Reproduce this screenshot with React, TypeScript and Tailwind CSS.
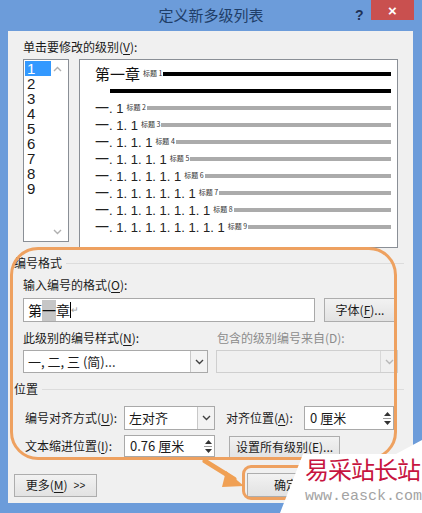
import React from "react";

const cjk = { fontFamily: '"Noto Sans CJK SC", "Liberation Sans", sans-serif' };
const latin = { fontFamily: '"Liberation Sans", "Noto Sans CJK SC", sans-serif' };

function Chevron({ up = false, className = "" }: { up?: boolean; className?: string }) {
  return (
    <svg width="9" height="6" viewBox="0 0 9 6" className={className}>
      <path
        d={up ? "M1 5 L4.5 1.5 L8 5" : "M1 1 L4.5 4.5 L8 1"}
        fill="none"
        stroke="currentColor"
        strokeWidth="1.4"
      />
    </svg>
  );
}

function Select({ text, w, disabled = false }: { text?: string; w: string; disabled?: boolean }) {
  return (
    <div
      className={`${w} flex h-full border ${
        disabled ? "border-[#cfcfcf] bg-[#f0f0f0]" : "border-[#a9a9a9] bg-white"
      }`}
    >
      <div className="flex flex-1 items-center pl-[4px] text-[13px] text-[#1a1a1a]" style={cjk}>
        {text}
      </div>
      <div
        className={`flex w-[17px] items-center justify-center border-l ${
          disabled ? "border-[#d8d8d8] text-[#b8b8b8]" : "border-[#c8c8c8] bg-[#f3f3f3] text-[#404040]"
        }`}
      >
        <Chevron />
      </div>
    </div>
  );
}

function Spin({ text, w }: { text: string; w: string }) {
  return (
    <div className={`${w} flex h-full border border-[#a9a9a9] bg-white`}>
      <div className="flex flex-1 items-center pl-[5px] text-[13px] text-[#1a1a1a]" style={cjk}>
        {text}
      </div>
      <div className="flex w-[11px] flex-col items-center justify-center gap-[2px] pr-[1px] text-[#333]">
        <svg width="7" height="4" viewBox="0 0 7 4">
          <path d="M0 4 L3.5 0 L7 4 Z" fill="currentColor" />
        </svg>
        <div className="h-px w-[8px] bg-[#9a9a9a]" />
        <svg width="7" height="4" viewBox="0 0 7 4">
          <path d="M0 0 L3.5 4 L7 0 Z" fill="currentColor" />
        </svg>
      </div>
    </div>
  );
}

function Btn({ children, w, className = "" }: { children: React.ReactNode; w: string; className?: string }) {
  return (
    <div
      className={`${w} flex items-center justify-center whitespace-nowrap border border-[#adadad] bg-gradient-to-b from-[#f2f2f2] to-[#e2e2e2] text-[12px] text-[#1a1a1a] ${className}`}
      style={cjk}
    >
      {children}
    </div>
  );
}

function U({ children }: { children: React.ReactNode }) {
  return <span className="underline underline-offset-2">{children}</span>;
}

function Group({ title }: { title: string }) {
  return (
    <div className="flex items-center gap-[4px] pl-[6px] pr-[9px]">
      <span className="text-[12px] leading-[16px] text-[#1a1a1a]" style={cjk}>
        {title}
      </span>
      <div className="h-px flex-1 bg-[#dcdcdc]" />
    </div>
  );
}

export default function App() {
  const levels = [2, 3, 4, 5, 6, 7, 8, 9];

  return (
    <div className="relative h-[513px] w-[422px] overflow-hidden bg-[#6c9cda]">
      {/* title bar */}
      <div className="relative flex h-[31px] items-center justify-center">
        <span className="text-[15px] text-[#1f3e68]" style={cjk}>
          定义新多级列表
        </span>
        <span
          className="absolute left-[355px] top-[5px] text-[14px] font-bold text-[#1f3256]"
          style={latin}
        >
          ?
        </span>
        <div
          className="absolute left-[371px] top-0 flex h-[20px] w-[43px] items-center justify-center bg-[#c9504f] text-[15px] font-bold leading-none text-white"
          style={latin}
        >
          ×
        </div>
      </div>

      {/* client */}
      <div className="ml-[8px] mr-[9px] h-[472px] bg-[#f0f0f0]">
        <div className="pl-[15px] pt-[8px] text-[12px] leading-[16px] text-[#1a1a1a]" style={cjk}>
          单击要修改的级别(<U>V</U>):
        </div>

        <div className="mt-[4px] flex items-start pl-[15px]">
          <div className="relative h-[183px] w-[46px] border border-[#8a8f96] bg-white">
            <div className="flex flex-col pl-[1px] pt-[1px]">
              {[1, 2, 3, 4, 5, 6, 7, 8, 9].map((n) => (
                <div
                  key={n}
                  className={`h-[15px] w-[26px] pl-[2px] text-[15px] leading-[15px] ${
                    n === 1 ? "bg-[#3399ff] text-white" : "text-[#1a1a1a]"
                  }`}
                  style={latin}
                >
                  {n}
                </div>
              ))}
            </div>
            <Chevron up className="absolute right-[6px] top-[6px] text-[#b0b0b0]" />
            <Chevron className="absolute bottom-[6px] right-[6px] text-[#b0b0b0]" />
          </div>

          <div className="ml-[10px] h-[189px] w-[319px] border border-[#8a8f96] bg-white pl-[15px] pr-[6px] pt-[5px]">
            <div className="flex h-[17px] items-center">
              <span className="text-[15px] leading-none text-[#111]" style={cjk}>
                第一章
              </span>
              <span className="ml-[3px] text-[7px] leading-none text-[#333]" style={cjk}>
                标题 1
              </span>
              <div className="ml-[1px] h-[4px] flex-1 bg-black" />
            </div>
            <div className="flex h-[17px] items-center pl-[15px]">
              <div className="h-[4px] flex-1 bg-black" />
            </div>
            {levels.map((lv) => (
              <div key={lv} className="flex h-[17px] items-center">
                <span className="text-[13px] leading-none text-[#222]" style={latin}>
                  <span className="text-[14px]" style={cjk}>一</span>
                  {". 1".repeat(lv - 1)}
                </span>
                <span className="ml-[3px] text-[7px] leading-none text-[#333]" style={cjk}>
                  标题 {lv}
                </span>
                <div className="ml-[1px] h-[4px] flex-1 bg-[#ababab]" />
              </div>
            ))}
          </div>
        </div>

        <div className="mt-[7px]">
          <Group title="编号格式" />
        </div>

        <div className="pl-[15px] pt-[6px] text-[12px] leading-[16px] text-[#1a1a1a]" style={cjk}>
          输入编号的格式(<U>O</U>):
        </div>
        <div className="mt-[5px] flex h-[24px] pl-[15px]">
          <div
            className="flex w-[292px] items-center border border-[#a9a9a9] bg-white pl-[4px] text-[14px] text-[#111]"
            style={cjk}
          >
            <span>第</span>
            <span className="bg-[#c6c6c6]">一</span>
            <span>章</span>
            <span className="h-[16px] w-px bg-black" />
            <span className="text-[9px] text-[#999]">↵</span>
          </div>
          <Btn w="w-[72px]" className="ml-[9px]">
            字体(<U>F</U>)...
          </Btn>
        </div>

        <div className="mt-[8px] flex text-[12px] leading-[16px]" style={cjk}>
          <div className="w-[209px] pl-[15px] text-[#1a1a1a]">
            此级别的编号样式(<U>N</U>):
          </div>
          <div className="text-[#8c8c8c]">包含的级别编号来自(D):</div>
        </div>
        <div className="mt-[4px] flex h-[23px] pl-[15px]">
          <Select text="一, 二, 三 (简)..." w="w-[185px]" />
          <div className="ml-[8px] h-full">
            <Select w="w-[182px]" disabled />
          </div>
        </div>

        <div className="mt-[8px]">
          <Group title="位置" />
        </div>

        <div className="mt-[9px] flex h-[24px] items-center" style={cjk}>
          <div className="w-[116px] whitespace-nowrap pl-[17px] text-[12px] text-[#1a1a1a]">
            编号对齐方式(<U>U</U>):
          </div>
          <Select text="左对齐" w="w-[91px]" />
          <div className="w-[89px] whitespace-nowrap pl-[11px] text-[12px] text-[#1a1a1a]">
            对齐位置(<U>A</U>):
          </div>
          <Spin text="0 厘米" w="w-[90px]" />
        </div>

        <div className="mt-[5px] flex h-[22px] items-center" style={cjk}>
          <div className="w-[116px] whitespace-nowrap pl-[17px] text-[12px] text-[#1a1a1a]">
            文本缩进位置(<U>I</U>):
          </div>
          <Spin text="0.76 厘米" w="w-[91px]" />
          <Btn w="w-[111px]" className="ml-[14px] mt-[2px] h-[23px]">
            设置所有级别(<U>E</U>)...
          </Btn>
        </div>

        <div className="mt-[16px] flex h-[24px] items-center">
          <Btn w="w-[83px]" className="ml-[6px] h-[23px]">
            更多(<U>M</U>)
            <span className="ml-[6px] text-[10px]" style={latin}>
              &gt;&gt;
            </span>
          </Btn>
          <Btn
            w="w-[78px]"
            className="ml-[150px] h-[24px] border-[#3c7fb1] from-[#eaf4fb] to-[#d9ebf8]"
          >
            确定
          </Btn>
        </div>
      </div>

      {/* orange annotation outline */}
      <div className="pointer-events-none absolute left-[10px] top-[247px] h-[213px] w-[387px] rounded-[28px] border-[3px] border-[#eea160]" />
      <div className="pointer-events-none absolute left-[242px] top-[465px] h-[35px] w-[70px] rounded-[9px] border-[3px] border-[#eea160]" />
      <svg
        className="pointer-events-none absolute left-[200px] top-[455px]"
        width="50"
        height="40"
        viewBox="0 0 50 40"
      >
        <path d="M5 6 L34 24" stroke="#f0a054" strokeWidth="5" strokeLinecap="round" />
        <path d="M26 16 L44 31 L22 32 Z" fill="#f0a054" />
      </svg>

      {/* watermark */}
      <div
        className="absolute left-[280px] top-[440px] h-[73px] w-[142px] bg-white"
        style={{ clipPath: "polygon(23px 14px, 116px 14px, 142px 0, 142px 73px, 0 73px)" }}
      >
        <div
          className="absolute left-[25px] top-[15px] text-[24px] leading-[28px] tracking-[-1px] text-[#c7143f]"
          style={cjk}
        >
          易采站长站
        </div>
        <div
          className="absolute left-[25px] top-[48px] text-[15px] leading-[18px] text-[#a3a3a3]"
          style={{ fontFamily: '"Liberation Mono", monospace' }}
        >
          www.easck.com
        </div>
      </div>
    </div>
  );
}
